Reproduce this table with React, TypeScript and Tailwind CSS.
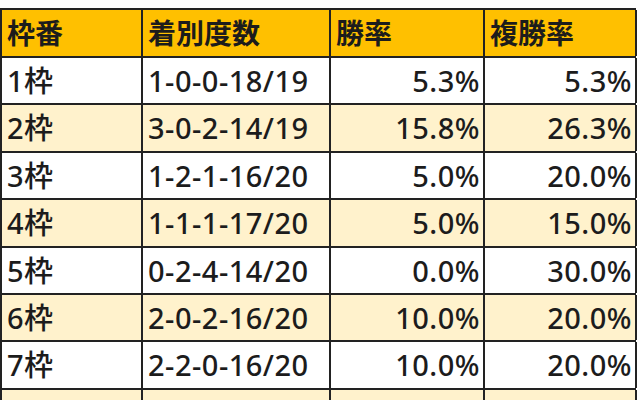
const rows = [
  ["1枠", "1-0-0-18/19", "5.3%", "5.3%"],
  ["2枠", "3-0-2-14/19", "15.8%", "26.3%"],
  ["3枠", "1-2-1-16/20", "5.0%", "20.0%"],
  ["4枠", "1-1-1-17/20", "5.0%", "15.0%"],
  ["5枠", "0-2-4-14/20", "0.0%", "30.0%"],
  ["6枠", "2-0-2-16/20", "10.0%", "20.0%"],
  ["7枠", "2-2-0-16/20", "10.0%", "20.0%"],
  ["", "", "", ""],
];

const cols = "grid grid-cols-[141px_188px_154px_152px]";
const cell = "border-r-2 border-[#222] flex items-center px-[5px]";

export default function App() {
  return (
    <div
      className="w-[640px] h-[400px] overflow-hidden bg-white pt-[8px] text-[#1c1c1c]"
      style={{ fontFamily: '"Noto Sans", "Noto Sans CJK JP", sans-serif' }}
    >
      <div className="w-[636px] border-l-2 border-t-2 border-[#222]">
        <div className={`${cols} h-[48px] border-b-2 border-[#222] bg-[#ffc000] text-[28px] font-bold`}>
          <div className={cell}>枠番</div>
          <div className={cell}>着別度数</div>
          <div className={cell}>勝率</div>
          <div className={cell}>複勝率</div>
        </div>
        {rows.map((r, i) => (
          <div
            key={i}
            className={`${cols} h-[47.4px] border-b-2 border-[#222] text-[29px] font-medium tracking-[0.5px] ${
              i % 2 === 1 ? "bg-[#fff2cc]" : "bg-white"
            }`}
          >
            <div className={cell}>{r[0]}</div>
            <div className={cell}>{r[1]}</div>
            <div className={`${cell} justify-end pr-[3px]`}>{r[2]}</div>
            <div className={`${cell} justify-end pr-[3px]`}>{r[3]}</div>
          </div>
        ))}
      </div>
    </div>
  );
}
